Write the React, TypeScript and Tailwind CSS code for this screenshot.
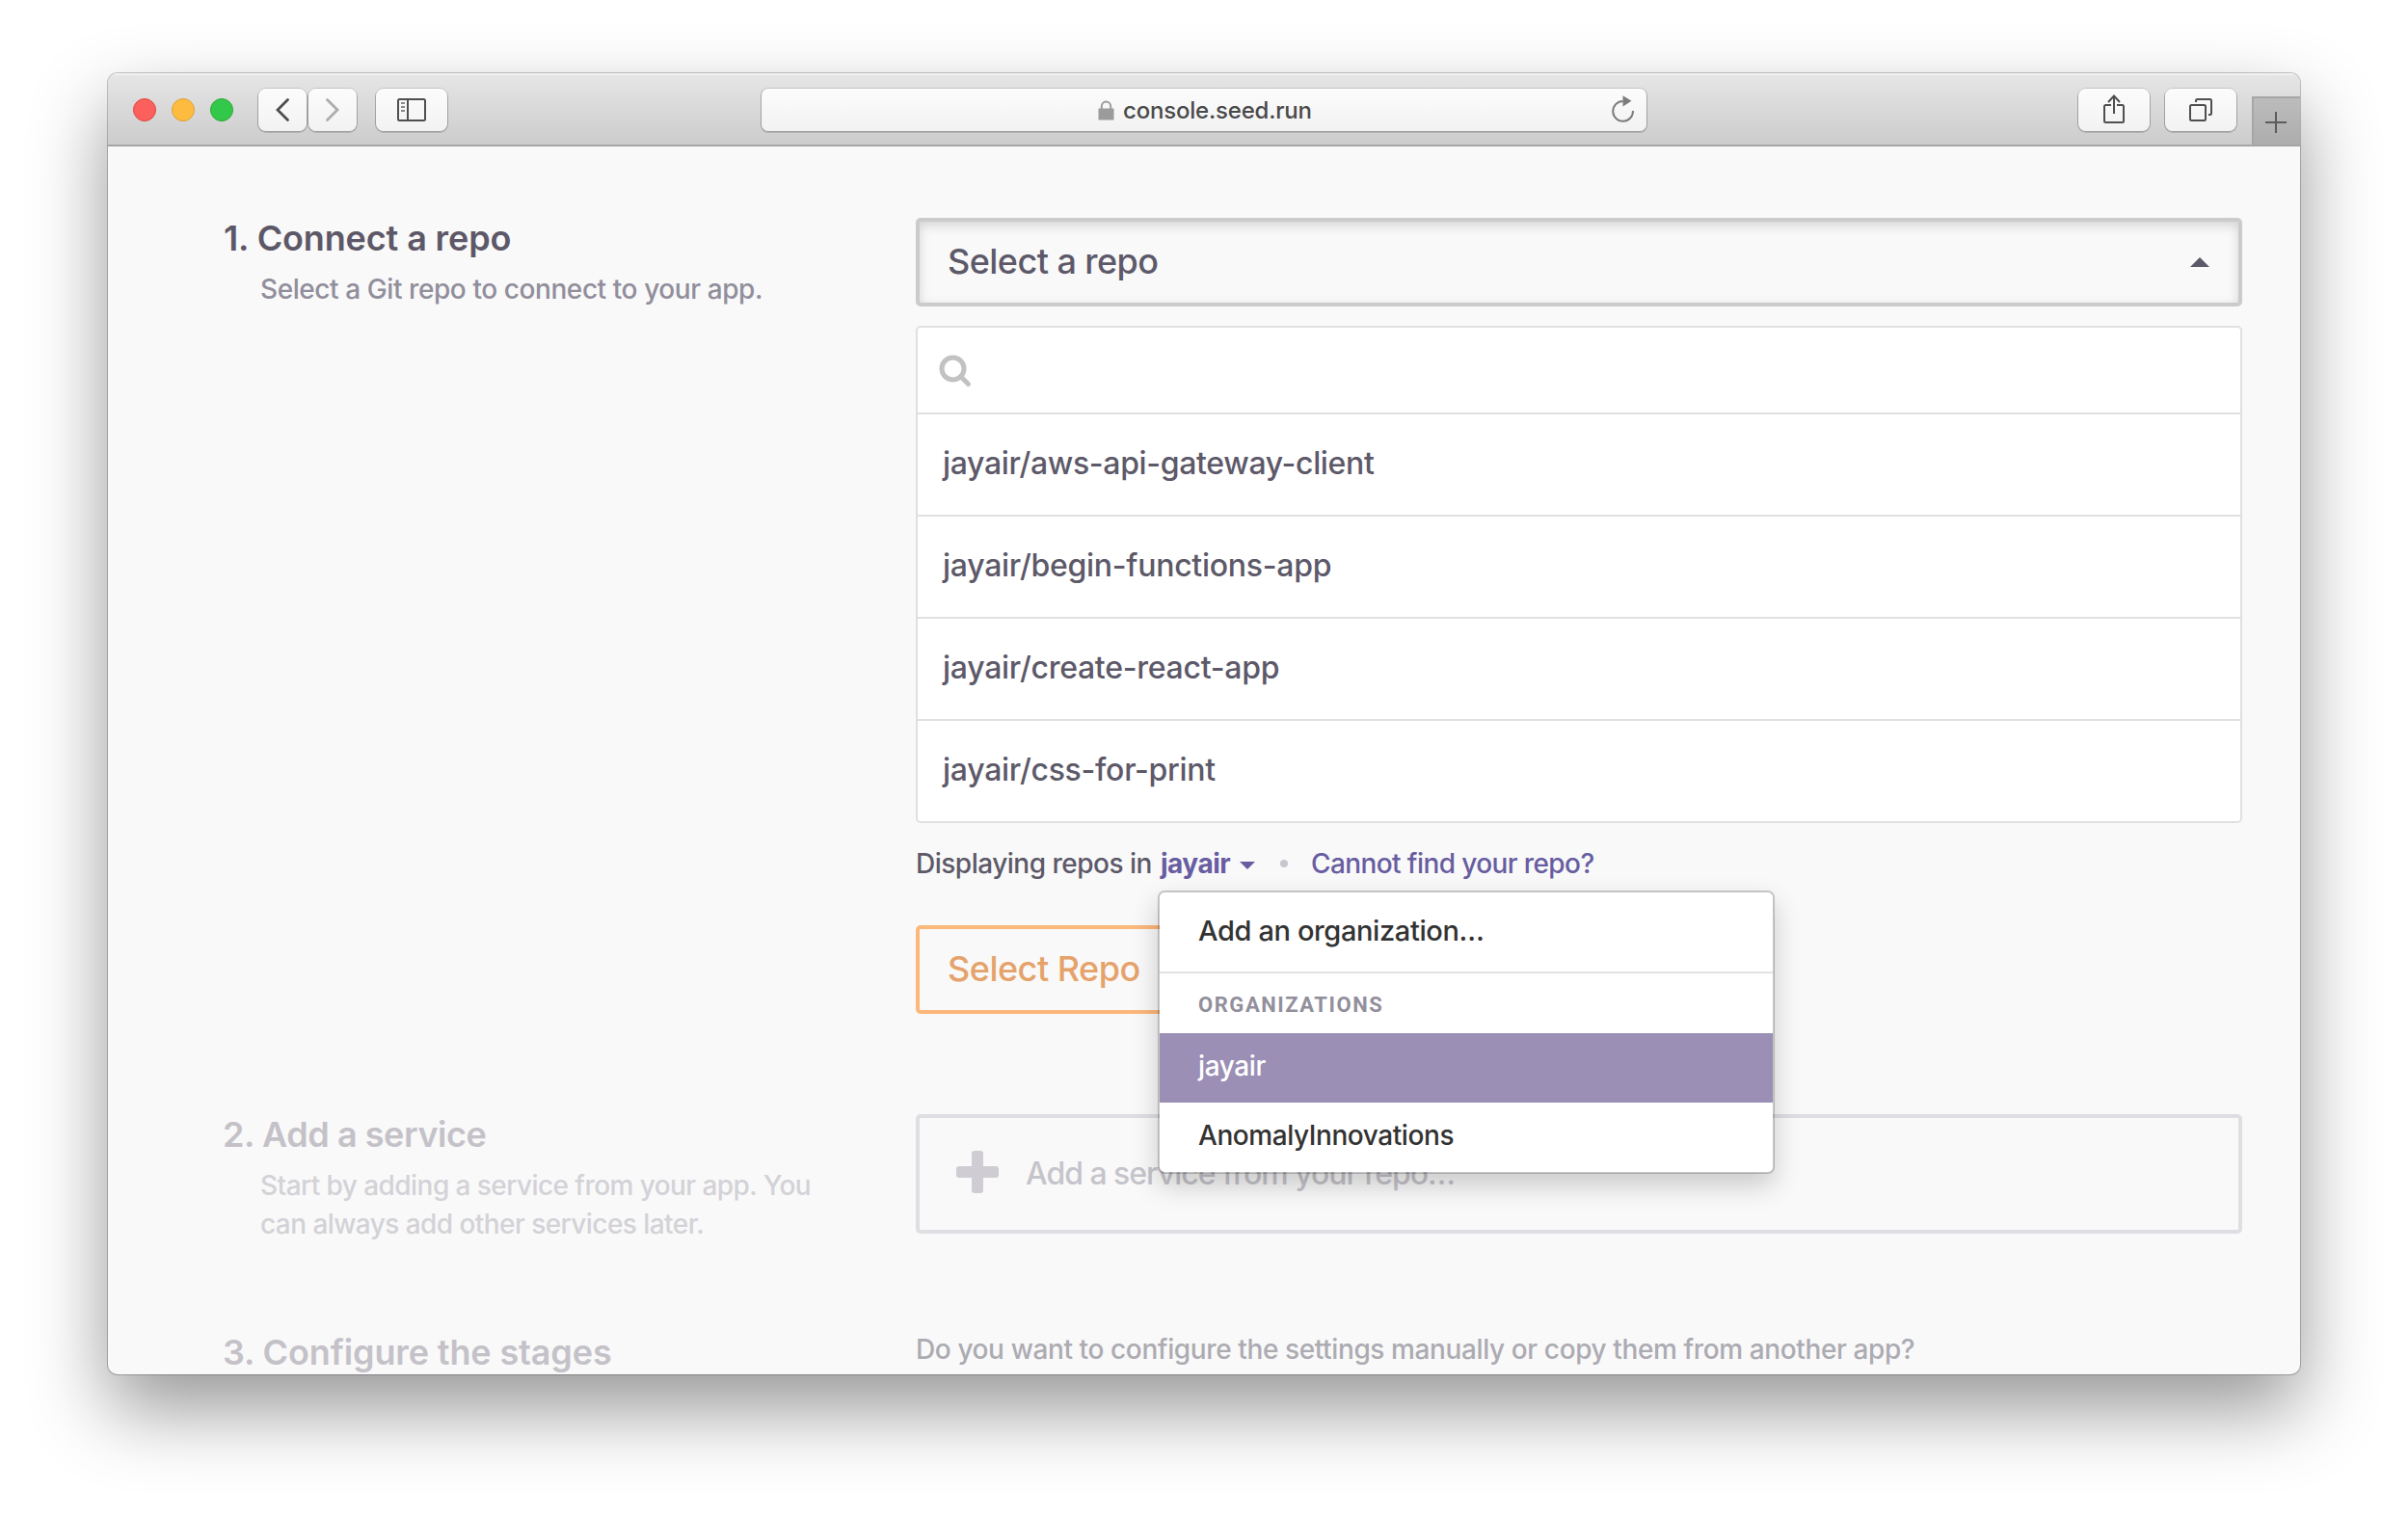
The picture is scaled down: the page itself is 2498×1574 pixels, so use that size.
import React from "react";

const repos = [
  { name: "jayair/aws-api-gateway-client", tracking: "tracking-[-0.34px]" },
  { name: "jayair/begin-functions-app", tracking: "tracking-[-0.27px]" },
  { name: "jayair/create-react-app", tracking: "tracking-[-0.27px]" },
  { name: "jayair/css-for-print", tracking: "tracking-[-0.27px]" },
];

function ToolButton({ className, children }: { className: string; children: React.ReactNode }) {
  return (
    <div
      className={`flex h-11 items-center justify-center rounded-[8px] bg-linear-to-b from-[#fcfcfc] to-[#f2f2f2] shadow-[0_0_0_1px_rgba(0,0,0,0.12),0_1px_0_1px_rgba(0,0,0,0.14)] ${className}`}
    >
      {children}
    </div>
  );
}

function Toolbar() {
  return (
    <header className="flex h-[76px] shrink-0 border-b-2 border-[#a6a6a6] bg-linear-to-b from-[#e6e6e6] to-[#cccccc] shadow-[inset_0_2px_0_rgba(255,255,255,0.45)]">
      <div className="flex w-[678px] items-start pt-4 pl-[26px]">
        <div className="flex gap-4 pt-[10px]">
          <span className="size-6 rounded-full border border-[#e2463f] bg-[#fc605c]" />
          <span className="size-6 rounded-full border border-[#dfa034] bg-[#fdbc40]" />
          <span className="size-6 rounded-full border border-[#27a934] bg-[#34c84a]" />
        </div>
        <div className="ml-[26px] flex gap-[2px]">
          <ToolButton className="w-[50px]">
            <svg className="-ml-[1px]" width="16" height="26" viewBox="0 0 16 26" fill="none" stroke="#4d4d4d" strokeWidth="2.800">
              <path d="M13.500 2.500 3 13l10.500 10.500" strokeLinecap="round" />
            </svg>
          </ToolButton>
          <ToolButton className="w-[50px]">
            <svg width="16" height="26" viewBox="0 0 16 26" fill="none" stroke="#acacac" strokeWidth="2.800">
              <path d="M2.500 2.500 13 13 2.500 23.500" strokeLinecap="round" />
            </svg>
          </ToolButton>
        </div>
        <ToolButton className="ml-5 w-[74px]">
          <svg width="30" height="24" viewBox="0 0 30 24" fill="none" stroke="#4f4f4f" strokeWidth="2">
            <rect x="1" y="1" width="28" height="22" rx="1.5" />
            <path d="M11 1v22" />
            <path d="M4 5h4M4 9h4M4 13h4" stroke="#8a8a8a" />
          </svg>
        </ToolButton>
      </div>

      <div className="mt-4 flex h-11 w-[918px] items-center justify-between rounded-[7px] bg-linear-to-b from-[#fcfcfc] to-[#f2f2f2] pr-[11px] pl-[349px] shadow-[0_0_0_1px_rgba(0,0,0,0.12),0_1px_0_1px_rgba(0,0,0,0.14)]">
        <div className="flex items-center pt-[2px]">
          <svg className="-mt-[1px]" width="17" height="21" viewBox="0 0 17 21">
            <rect x="0.5" y="8.5" width="16" height="12" fill="#9b9b9b" />
            <path d="M3.8 9V6.5a4.7 5 0 0 1 9.4 0V9" fill="none" stroke="#9b9b9b" strokeWidth="2" />
          </svg>
          <span className="ml-[9px] text-[24px] leading-[30px] tracking-[-0.2px] text-[#4a4a4a]">console.seed.run</span>
        </div>
        <svg className="-mt-[2px]" width="26" height="30" viewBox="0 0 26 30" fill="none" stroke="#7c7c7c" strokeWidth="2">
          <path d="M12.6 7A10.4 10.4 0 1 0 23 17" />
          <path d="M12.500 1.200 21.500 6.800l-9 5.600z" fill="#7c7c7c" stroke="none" />
        </svg>
      </div>

      <div className="flex flex-1 items-start justify-end">
        <div className="flex gap-4 pt-4">
          <ToolButton className="w-[74px]">
            <svg className="-mt-[2px]" width="24" height="32" viewBox="0 0 24 32" fill="none" stroke="#4f4f4f" strokeWidth="2">
              <path d="M9 12H3.5A1.5 1.5 0 0 0 2 13.500v15A1.500 1.500 0 0 0 3.500 30h17a1.500 1.500 0 0 0 1.500-1.500v-15a1.500 1.500 0 0 0-1.500-1.500H15" />
              <path d="M12 21V2.500M6 9l6-6.500L18 9" />
            </svg>
          </ToolButton>
          <ToolButton className="w-[74px]">
            <svg width="26" height="26" viewBox="0 0 26 26" fill="none" stroke="#4f4f4f" strokeWidth="2">
              <rect x="2" y="8" width="16" height="16" rx="1.5" />
              <path d="M8 5V3.500A1.500 1.500 0 0 1 9.500 2h13A1.500 1.500 0 0 1 24 3.500v13a1.500 1.500 0 0 1-1.500 1.500H21" />
            </svg>
          </ToolButton>
        </div>
        <div className="mt-6 ml-4 flex h-[50px] w-[50px] items-center justify-center border-t-2 border-l-2 border-[#a6a6a6] bg-linear-to-b from-[#bcbcbc] to-[#adadad] pt-[2px] pr-[2px]">
          <svg width="22" height="22" viewBox="0 0 22 22" stroke="#5c5c5c" strokeWidth="2">
            <path d="M11 0v22M0 11h22" />
          </svg>
        </div>
      </div>
    </header>
  );
}

function OrganizationMenu() {
  return (
    <div className="absolute top-[46px] -left-[3px] z-10 w-[640px] overflow-hidden rounded-[7px] border-2 border-black/20 bg-white bg-clip-padding text-[28px] text-[#333333] shadow-[0_12px_28px_rgba(0,0,0,0.19)]">
      <div className="flex h-[84px] items-center border-b-2 border-[#e3e3e3] pb-[2px] pl-10 text-[29px] tracking-[-0.38px]">
        Add an organization…
      </div>
      <div className="flex h-[62px] items-center pt-[3px] pl-10 font-['Roboto',sans-serif] text-[22px] font-bold tracking-[1.55px] text-[#928f9c]">
        ORGANIZATIONS
      </div>
      <div className="flex h-[72px] items-center bg-[#9b8fb5] pb-1 pl-10 tracking-[-0.4px] text-white">jayair</div>
      <div className="flex h-[72px] items-center pb-1 pl-10 tracking-[-0.43px]">AnomalyInnovations</div>
    </div>
  );
}

function RepoPicker() {
  return (
    <div className="flex w-[1376px] flex-col text-[#5d5969]">
      <div className="flex h-[92px] items-center justify-between rounded-[5px] border-4 border-[#cbcbcb] pr-[30px] pb-[2px] pl-[29px] text-[36px] tracking-[-0.55px] shadow-[inset_0_4px_12px_rgba(0,0,0,0.15)]">
        Select a repo
        <svg className="mt-[2px]" width="20" height="10" viewBox="0 0 20 10" fill="#5d5969">
          <path d="M0 10 10 0l10 10z" />
        </svg>
      </div>

      <div className="mt-5 rounded-[5px] border-2 border-[#e0e0e0] bg-white">
        <div className="flex h-[88px] items-center pt-[2px] pl-[21px]">
          <svg width="36" height="36" viewBox="0 0 36 36" fill="none" stroke="#c2c2c2" strokeWidth="5">
            <circle cx="15.500" cy="15.500" r="11.500" />
            <path d="m24 24 7.500 7.500" strokeLinecap="round" />
          </svg>
        </div>
        {repos.map((repo) => (
          <div
            key={repo.name}
            className={`flex h-[106px] items-center border-t-2 border-[#e0e0e0] pb-[2px] pl-[26px] text-[32px] ${repo.tracking}`}
          >
            {repo.name}
          </div>
        ))}
      </div>

      <div className="mt-6 flex h-9 text-[28px] leading-9">
        <span className="w-[254px] tracking-[-0.5px] whitespace-nowrap">Displaying repos in</span>
        <div className="relative flex w-[127px] items-center">
          <span className="font-bold tracking-[-0.5px] text-[#685da1]">jayair</span>
          <svg className="mt-1 ml-[10px]" width="16" height="8" viewBox="0 0 16 8" fill="#685da1">
            <path d="M0 0h16L8 8z" />
          </svg>
          <OrganizationMenu />
        </div>
        <span className="mt-[14px] -ml-[3px] size-2 rounded-full bg-[#c8c6cd]" />
        <span className="ml-6 tracking-[-0.6px] text-[#685da1]">Cannot find your repo?</span>
      </div>

      <div className="mt-[46px] flex h-[92px] w-[268px] items-center rounded-[5px] border-4 border-[#fcb77a] pb-[2px] pl-[29px] text-[36px] tracking-[-0.5px] whitespace-nowrap text-[#e5a36b]">
        Select Repo
      </div>
    </div>
  );
}

export default function App() {
  return (
    <div className="h-[1574px] w-[2498px] overflow-hidden bg-white pt-[76px] pl-[112px] font-['Inter',sans-serif] font-[450]">
      <div className="flex h-[1350px] w-[2274px] flex-col overflow-hidden rounded-[10px] bg-[#f9f9f9] shadow-[0_0_0_1px_rgba(0,0,0,0.22),0_36px_80px_rgba(0,0,0,0.41)]">
        <Toolbar />
        <main className="flex flex-col pt-[74px] pl-[120px]">
          <section className="flex">
            <div className="w-[718px]">
              <h2 className="text-[36px] leading-[42px] font-semibold tracking-[-0.13px] text-[#5d5868]">1. Connect a repo</h2>
              <p className="mt-3 pl-[38px] text-[28px] leading-10 tracking-[-0.42px] text-[#918e9c]">
                Select a Git repo to connect to your app.
              </p>
            </div>
            <RepoPicker />
          </section>

          <section className="mt-[104px] flex h-[124px]">
            <div className="w-[718px]">
              <h2 className="-ml-[1px] text-[36px] leading-[42px] font-semibold tracking-[-0.43px] text-[#c4c2c8]">2. Add a service</h2>
              <p className="mt-3 pl-[38px] text-[28px] leading-10 tracking-[-0.56px] text-[#d3d2d7]">
                Start by adding a service from your app. You
                <br />
                can always add other services later.
              </p>
            </div>
            <div className="flex w-[1376px] items-center rounded-[5px] border-4 border-[#dedee3] pl-[38px]">
              <svg className="-mt-[4px]" width="44" height="44" viewBox="0 0 44 44" fill="#cfcdd3">
                <rect x="16" width="12" height="44" rx="3" />
                <rect y="16" width="44" height="12" rx="3" />
              </svg>
              <span className="ml-[28px] text-[32px] tracking-[-1.02px] text-[#c6c4cb]">
                Add a service from your repo…
              </span>
            </div>
          </section>

          <section className="mt-[102px] flex">
            <div className="w-[718px]">
              <h2 className="-ml-[1px] text-[36px] leading-[42px] font-semibold tracking-[-0.13px] text-[#c4c2c8]">
                3. Configure the stages
              </h2>
            </div>
            <p className="text-[28px] leading-9 tracking-[-0.39px] text-[#acabb2]">
              Do you want to configure the settings manually or copy them from another app?
            </p>
          </section>
        </main>
      </div>
    </div>
  );
}
